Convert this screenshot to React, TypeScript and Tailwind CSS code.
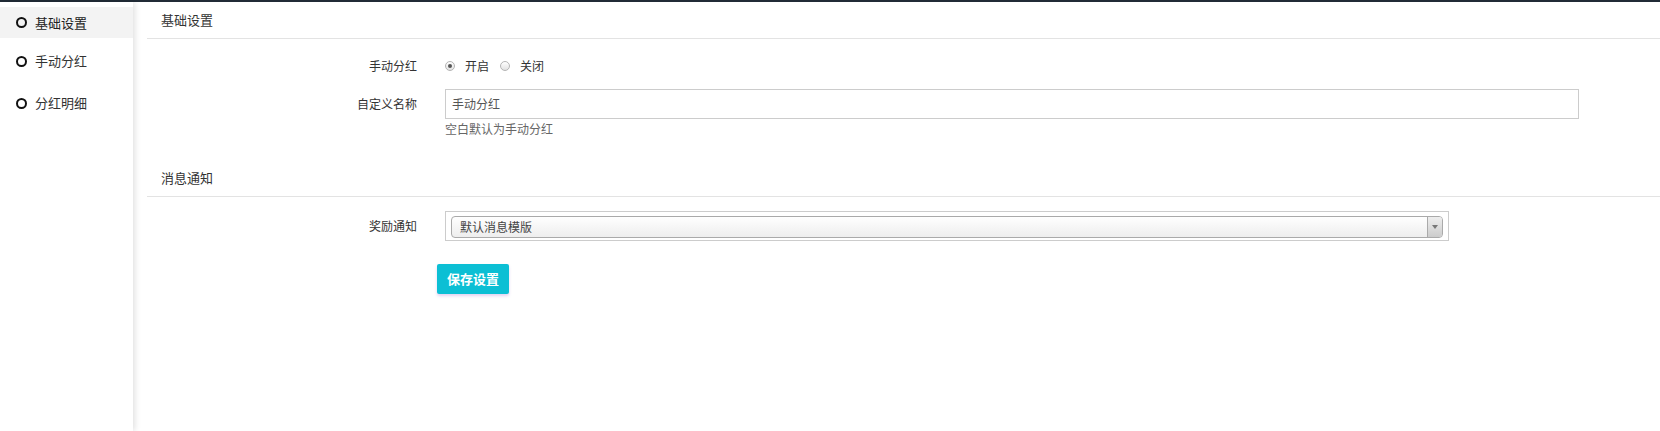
import React from "react";

const font = { fontFamily: '"Noto Sans CJK SC", "Liberation Sans", sans-serif' };

const menu = [
  { label: "基础设置", active: true },
  { label: "手动分红", active: false },
  { label: "分红明细", active: false },
];

const Radio = ({ checked, label }: { checked?: boolean; label: string }) => (
  <label className="flex items-center">
    <span className="flex h-[10px] w-[10px] items-center justify-center rounded-full border border-[#b4b4b4] bg-gradient-to-b from-white to-[#e2e2e2]">
      {checked && <span className="h-[4px] w-[4px] rounded-full bg-[#555]" />}
    </span>
    <span className="ml-[10px] text-[12px] text-[#333]">{label}</span>
  </label>
);

const SectionTitle = ({ title }: { title: string }) => (
  <div className="flex h-[37px] items-center border-b border-[#e3e3e3] pl-[14px] text-[13px] text-[#333]">
    {title}
  </div>
);

const App = () => {
  return (
    <div className="flex h-[431px] w-[1660px] flex-col overflow-hidden bg-white" style={font}>
      <div className="h-[2px] bg-[#212b36]" />
      <div className="flex flex-1">
        <aside className="relative z-10 w-[133px] bg-white shadow-[2px_0_6px_rgba(0,0,0,0.12)]">
          {menu.map((m) =>
            m.active ? (
              <div key={m.label} className="pb-[2px] pt-[5px]">
                <div className="flex h-[31px] items-center bg-[#f3f3f3] pl-[16px] text-[13px] text-[#222]">
                  <span className="h-[11px] w-[11px] rounded-full border-[2px] border-[#111]" />
                  <span className="ml-[8px]">{m.label}</span>
                </div>
              </div>
            ) : (
              <div key={m.label} className="flex h-[42px] items-center pl-[16px] text-[13px] text-[#333]">
                <span className="h-[11px] w-[11px] rounded-full border-[2px] border-[#111]" />
                <span className="ml-[8px]">{m.label}</span>
              </div>
            )
          )}
        </aside>

        <main className="flex-1 pl-[14px]">
          <SectionTitle title="基础设置" />

          <div className="mt-[17px] flex h-[20px] items-center">
            <div className="w-[270px] text-right text-[12px] text-[#333]">手动分红</div>
            <div className="ml-[28px] flex items-center gap-[11px]">
              <Radio checked label="开启" />
              <Radio label="关闭" />
            </div>
          </div>

          <div className="mt-[13px] flex">
            <div className="flex h-[30px] w-[270px] items-center justify-end text-[12px] text-[#333]">
              自定义名称
            </div>
            <div className="ml-[28px]">
              <div className="flex h-[30px] w-[1134px] items-center border border-[#ccc] pl-[6px] text-[12px] text-[#555]">
                手动分红
              </div>
              <div className="mt-[2px] text-[12px] leading-[16px] text-[#666]">空白默认为手动分红</div>
            </div>
          </div>

          <div className="mt-[23px]">
            <SectionTitle title="消息通知" />
          </div>

          <div className="mt-[14px] flex items-center">
            <div className="w-[270px] text-right text-[12px] text-[#333]">奖励通知</div>
            <div className="ml-[28px] w-[1004px] border border-[#ccc] px-[5px] pb-[2px] pt-[4px]">
              <div className="flex h-[22px] items-center overflow-hidden rounded-[4px] border border-[#aaa] bg-gradient-to-b from-white via-[#f6f6f6] to-[#eee]">
                <span className="flex-1 pl-[8px] text-[12px] text-[#444]">默认消息模版</span>
                <span className="flex h-full w-[15px] items-center justify-center border-l border-[#aaa] bg-gradient-to-b from-[#eee] to-[#ccc]">
                  <span className="h-0 w-0 border-x-[3px] border-t-[4px] border-x-transparent border-t-[#777]" />
                </span>
              </div>
            </div>
          </div>

          <div className="mt-[23px] pl-[290px]">
            <button className="h-[30px] w-[72px] rounded-[2px] bg-[#0cbfd4] text-[13px] font-bold text-white shadow-[0_2px_3px_rgba(140,80,200,0.25)]">
              保存设置
            </button>
          </div>
        </main>
      </div>
    </div>
  );
};

export default App;
